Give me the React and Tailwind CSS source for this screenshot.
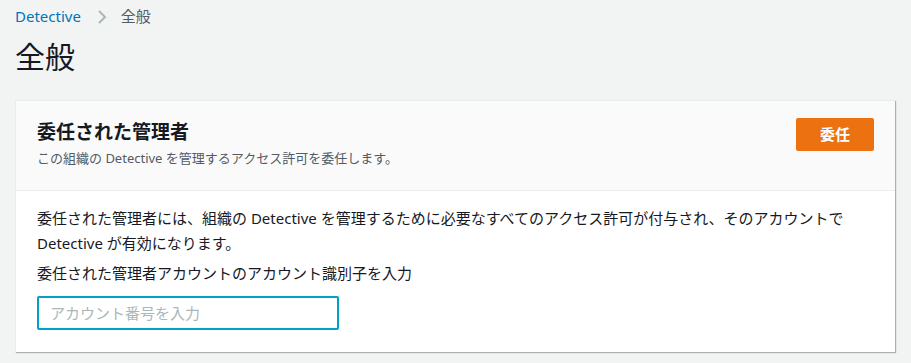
import React from 'react';

const font = { fontFamily: '"Noto Sans", "Noto Sans CJK JP", sans-serif' };

export default function App() {
  return (
    <div className="min-h-[363px] w-full bg-[#f2f3f3] px-[15px] text-[#16191f]" style={font}>
      {/* breadcrumb */}
      <div className="flex h-[32px] items-center pt-[1px] text-[15px]">
        <span className="text-[#0073bb]">Detective</span>
        <svg className="ml-[16px] mr-[14px]" width="10" height="16" viewBox="0 0 10 16" fill="none">
          <path d="M2 2l6 6-6 6" stroke="#aab7b8" strokeWidth="2" />
        </svg>
        <span className="text-[#545b64]">全般</span>
      </div>
      <h1 className="mt-[4px] text-[30px] leading-[42px] font-normal">全般</h1>

      <div className="mt-[22px] w-[880px] border-t border-l border-[#eaeded] bg-white shadow-[1px_1px_1px_0_rgba(0,28,36,0.3)]">
        <div className="flex items-start justify-between border-b border-[#eaeded] bg-[#fafafa] pl-[21px] pr-[21px] pt-[16px] pb-[22px]">
          <div>
            <div className="text-[19px] leading-[30px] font-bold">委任された管理者</div>
            <div className="mt-[1px] text-[13px] leading-[20px] text-[#545b64]">この組織の Detective を管理するアクセス許可を委任します。</div>
          </div>
          <button className="mt-[1px] h-[33px] w-[78px] rounded-[2px] bg-[#ec7211] text-[15px] font-bold text-white">委任</button>
        </div>
        <div className="px-[21px] pt-[15px] pb-[22px] text-[15px] leading-[25px]">
          <p>委任された管理者には、組織の Detective を管理するために必要なすべてのアクセス許可が付与され、そのアカウントで Detective が有効になります。</p>
          <p className="mt-[5px]">委任された管理者アカウントのアカウント識別子を入力</p>
          <input
            className="mt-[10px] h-[34px] w-[302px] rounded-[2px] border-2 border-[#00a1c9] px-[11px] text-[15px] outline-none placeholder:text-[#aab7b8]"
            style={font}
            placeholder="アカウント番号を入力"
          />
        </div>
      </div>
    </div>
  );
}
